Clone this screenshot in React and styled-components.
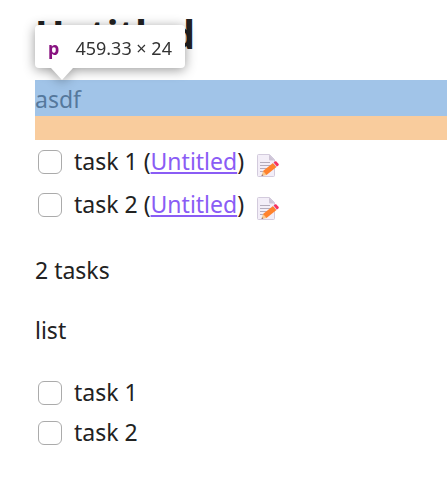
import { useState } from "react"
import styled, { createGlobalStyle } from "styled-components"

const GlobalStyle = createGlobalStyle`
  * {
    box-sizing: border-box;
  }

  body {
    margin: 0;
    background: #ffffff;
    color: #222222;
    font-family: "Noto Sans", "Open Sans", sans-serif;
    font-size: 23px;
    line-height: 34px;
  }
`

// Styled components
const Note = styled.main`
  padding: 8px 0 40px 35px;
  overflow: hidden;
`

const Title = styled.h1`
  margin: 0 0 20px;
  font-size: 39px;
  line-height: 52px;
  font-weight: 700;
`

const Paragraph = styled.p`
  margin: 0 0 24px;
  padding-top: 2px;
`

const Inspected = styled.div`
  position: relative;

  ${Paragraph} {
    margin: 0;
    padding-bottom: 24px;
  }
`

const Highlight = styled.div`
  position: absolute;
  inset: 0;
  display: flex;
  flex-direction: column;
  pointer-events: none;
`

const ContentArea = styled.div`
  flex: 1;
  background: rgba(112, 165, 220, 0.66);
`

const MarginArea = styled.div`
  height: 24px;
  background: rgba(246, 178, 107, 0.66);
`

const Tooltip = styled.div`
  position: absolute;
  left: 0;
  bottom: 100%;
  display: flex;
  gap: 16px;
  height: 43px;
  margin-bottom: 12px;
  padding: 0 13px;
  border-radius: 4px;
  background: #ffffff;
  color: #333333;
  font-size: 18px;
  line-height: 46px;
  white-space: nowrap;
  filter: drop-shadow(0 2px 6px rgba(0, 0, 0, 0.4));

  &::after {
    content: "";
    position: absolute;
    top: 100%;
    left: 16px;
    border: 11px solid transparent;
    border-top: 12px solid #ffffff;
    border-bottom: 0;
  }
`

const TagName = styled.strong`
  color: #881280;
`

const TaskList = styled.ul`
  list-style: none;
  margin: 0 0 25px;
  padding: 0;
`

const TaskItem = styled.li`
  display: flex;
  align-items: flex-start;
  gap: 12px;
  min-height: ${(props) => (props.$tall ? "43px" : "40px")};
  padding: 4px 3px 2px;
`

const Checkbox = styled.input`
  appearance: none;
  flex: none;
  width: 24px;
  height: 24px;
  margin: 6px 0 0;
  border: 1px solid #ababab;
  border-radius: 6px;
  background: #ffffff;
  cursor: pointer;

  &:checked {
    background: #8a5cf5;
    border-color: #8a5cf5;
  }
`

const NoteLink = styled.a`
  color: #8a5cf5;
  text-decoration: underline;
  text-decoration-thickness: 2px;
  text-underline-offset: 2px;
`

const EditButton = styled.button`
  display: block;
  width: 26px;
  height: 26px;
  margin: 9px 0 0;
  padding: 0;
  border: none;
  background: none;
  cursor: pointer;

  svg {
    display: block;
  }
`

const MemoIcon = () => (
  <svg width="26" height="26" viewBox="1 0 26 26" aria-hidden="true">
    <path d="M3.5 1.5h11l5 5v16a1 1 0 0 1-1 1h-15a1 1 0 0 1-1-1v-20a1 1 0 0 1 1-1z" fill="#f3eef8" stroke="#d3cbdd" strokeWidth="1" />
    <path d="M14 1.5l6 6h-5a1 1 0 0 1-1-1z" fill="#cdc4d6" />
    <path d="M5 9.5h10M5 12.500h11M5 15.5h8M5 18.5h5" stroke="#b4acbc" strokeWidth="1" />
    <path d="M6.500 23l1.500-5 4 4z" fill="#f9c98b" />
    <path d="M6.500 23l.6-1.800 1.300 1.300z" fill="#806070" />
    <path d="M8 18l10-8 3.500 4-10 8z" fill="#ff822d" />
    <path d="M18 10l1-.9 3.400 4-1 .9z" fill="#d8d0df" />
    <path d="M18.700 9.500l1.200-.9c.6-.5 1.200-.4 1.700.1l1.900 2c.5.6.4 1.200-.1 1.700l-1.500 1.200z" fill="#f8315e" />
  </svg>
)

const queryTasks = [
  { id: "query-1", text: "task 1", note: "Untitled" },
  { id: "query-2", text: "task 2", note: "Untitled" },
]

const listTasks = [
  { id: "list-1", text: "task 1" },
  { id: "list-2", text: "task 2" },
]

const Task = ({ task }) => {
  const [done, setDone] = useState(false)

  return (
    <TaskItem $tall={Boolean(task.note)}>
      <Checkbox
        type="checkbox"
        id={task.id}
        checked={done}
        onChange={(e) => setDone(e.target.checked)}
      />
      <span>
        <label htmlFor={task.id}>{task.text}</label>
        {task.note && (
          <> (<NoteLink href="#note">{task.note}</NoteLink>)</>
        )}
      </span>
      {task.note && (
        <EditButton type="button" aria-label="Edit task">
          <MemoIcon />
        </EditButton>
      )}
    </TaskItem>
  )
}

const App = () => (
  <>
    <GlobalStyle />
    <Note>
      <Title>Untitled</Title>
      <Inspected>
        <Paragraph>asdf</Paragraph>
        <Highlight>
          <ContentArea />
          <MarginArea />
        </Highlight>
        <Tooltip>
          <TagName>p</TagName>
          <span>459.33 × 24</span>
        </Tooltip>
      </Inspected>
      <TaskList>
        {queryTasks.map((task) => (
          <Task key={task.id} task={task} />
        ))}
      </TaskList>
      <Paragraph>2 tasks</Paragraph>
      <Paragraph>list</Paragraph>
      <TaskList>
        {listTasks.map((task) => (
          <Task key={task.id} task={task} />
        ))}
      </TaskList>
    </Note>
  </>
)

export default App
